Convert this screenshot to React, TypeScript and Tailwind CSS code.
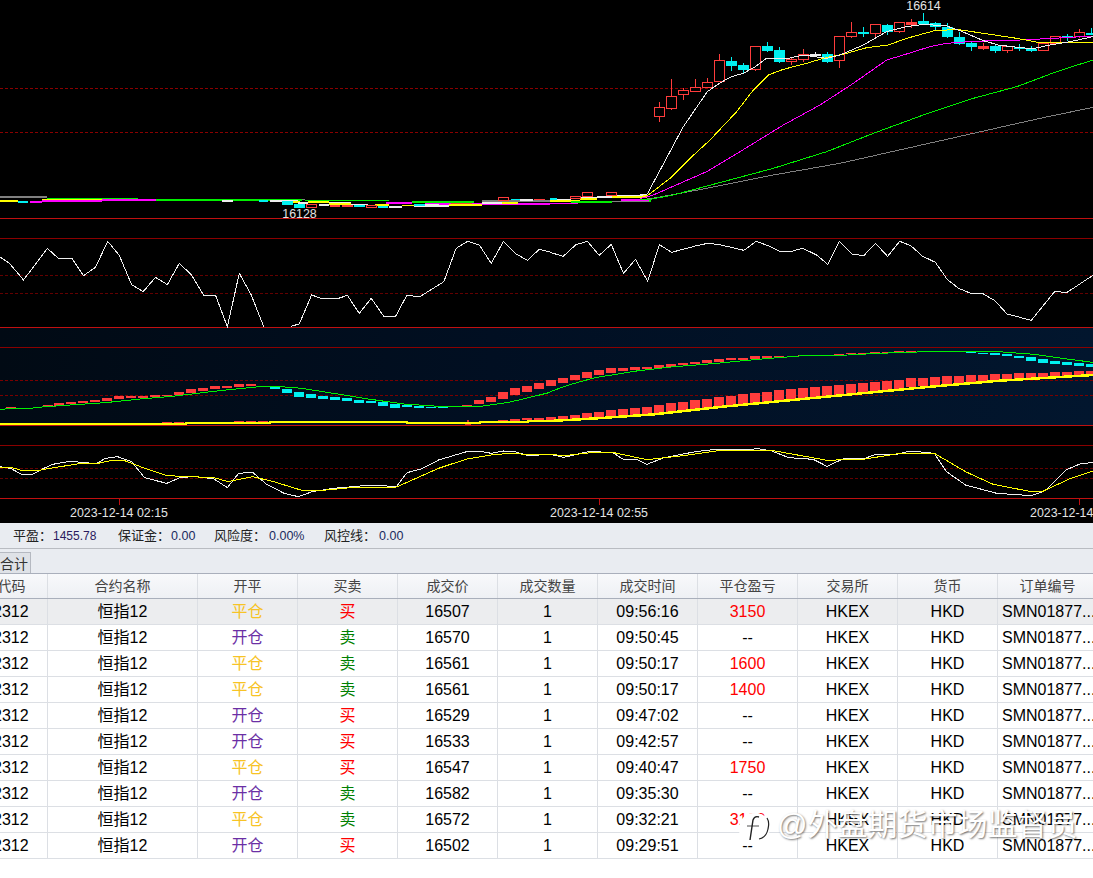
const RED = '#ff3c3c';
const CYAN = '#00f0f0';
const WHITE = '#eeeeee';
const YELLOW = '#ffff00';
const GREEN = '#00f000';
const MAGENTA = '#ff00ff';
const GRAY = '#808080';

type Pt = [number, number];

// points below were read off zoomed crops, so each chunk has its own scale/offset
const top = (p: Pt[]) => p.map(([x, y]) => `${640 + x / 3},${y / 3}`).join(' ');
const left = (p: Pt[], oy: number) => p.map(([x, y]) => `${x / 2.85},${oy + y / 3}`).join(' ');
const right = (p: Pt[], oy: number) => p.map(([x, y]) => `${550 + x / 2.888},${oy + y / 3}`).join(' ');

// x, color (r/c/w), high, body top, body bottom, low, filled
const candles: [number, string, number, number, number, number, boolean?][] = [
  [58, 'r', 306, 320, 346, 366],
  [94, 'r', 237, 287, 322, 330],
  [130, 'r', 265, 271, 283, 300],
  [166, 'r', 238, 260, 271, 275],
  [202, 'r', 234, 245, 260, 262],
  [238, 'r', 162, 181, 244, 245],
  [274, 'c', 172, 183, 195, 212],
  [310, 'c', 190, 195, 206, 218],
  [346, 'r', 139, 139, 209, 212],
  [382, 'c', 127, 138, 150, 155],
  [418, 'c', 142, 150, 182, 190],
  [454, 'r', 172, 178, 185, 195],
  [490, 'r', 148, 163, 178, 185],
  [526, 'w', 155, 163, 164, 172],
  [562, 'c', 155, 162, 182, 188],
  [598, 'r', 109, 109, 182, 203],
  [634, 'r', 66, 97, 109, 113],
  [670, 'c', 80, 96, 97, 112],
  [706, 'r', 73, 73, 100, 112],
  [742, 'c', 72, 76, 95, 104],
  [778, 'r', 67, 67, 94, 98],
  [814, 'r', 58, 67, 72, 85, true],
  [850, 'c', 40, 63, 68, 75],
  [886, 'c', 66, 70, 80, 93],
  [922, 'c', 70, 82, 110, 113],
  [958, 'c', 97, 111, 128, 134],
  [994, 'c', 125, 129, 137, 152],
  [1030, 'r', 130, 138, 143, 150, true],
  [1066, 'c', 132, 138, 150, 158],
  [1102, 'r', 138, 138, 151, 158],
  [1138, 'c', 132, 142, 143, 152],
  [1174, 'c', 138, 148, 149, 155],
  [1210, 'r', 125, 129, 149, 152],
  [1246, 'r', 108, 108, 130, 135],
  [1282, 'c', 102, 108, 109, 122],
  [1318, 'r', 87, 97, 110, 113],
  [1354, 'c', 85, 100, 101, 106],
];

// flat stretch before the jump: x1, x2, y, color
const flatLeft: [number, number, number, string][] = [
  [0, 135, 49, GRAY], [135, 392, 53, GREEN], [392, 870, 56, GRAY], [445, 860, 58, GREEN],
  [290, 445, 58, MAGENTA], [120, 290, 58, YELLOW], [120, 290, 61, MAGENTA], [0, 50, 61, YELLOW],
  [50, 80, 63, CYAN], [85, 120, 64, MAGENTA], [633, 663, 61, WHITE], [737, 763, 61, CYAN],
  [770, 850, 61, WHITE], [830, 855, 63, YELLOW], [870, 1110, 59, GREEN], [878, 938, 64, YELLOW],
  [850, 878, 67, WHITE], [910, 938, 73, WHITE], [938, 1000, 66, WHITE], [938, 1000, 69, YELLOW],
  [1000, 1050, 71, WHITE], [1100, 1175, 67, MAGENTA], [1175, 1350, 64, GREEN], [1210, 1568, 70, MAGENTA],
  [1070, 1110, 73, YELLOW], [1110, 1145, 79, WHITE], [1145, 1180, 74, YELLOW], [1180, 1280, 76, WHITE],
  [1180, 1210, 72, CYAN], [1212, 1250, 72, WHITE], [1280, 1375, 73, YELLOW], [1285, 1345, 68, RED],
  [1375, 1430, 67, WHITE], [1430, 1475, 67, YELLOW], [1375, 1568, 61, GRAY], [1455, 1482, 56, CYAN],
  [1482, 1520, 58, WHITE], [1523, 1553, 56, RED], [940, 970, 76, RED], [975, 1005, 76, RED],
  [1010, 1040, 76, CYAN], [1078, 1105, 79, CYAN],
];
const flatRight: [number, number, number, string][] = [
  [0, 60, 58, WHITE], [0, 87, 60, YELLOW], [0, 80, 68, MAGENTA], [60, 180, 64, GREEN],
  [87, 135, 52, WHITE], [87, 135, 55, YELLOW], [135, 180, 48, WHITE], [180, 280, 48, YELLOW],
  [190, 280, 44, WHITE], [205, 285, 58, MAGENTA], [180, 290, 62, GRAY], [0, 20, 55, CYAN],
  [285, 293, 60, GREEN],
];
// small outlined / filled candles inside the flat stretch (pixel coords)
const flatBoxes: [number, number, number, number, string, boolean][] = [
  [306, 204, 10, 3, RED, false],
  [294, 204, 10, 3, CYAN, true],
  [282, 201, 10, 3, CYAN, true],
  [366, 205, 10, 2, RED, false],
  [498, 197, 10, 3, RED, false],
  [570, 196, 10, 2, RED, false],
  [582, 192, 10, 4, RED, false],
  [606, 192, 10, 3, RED, false],
];

const whiteOsc1: Pt[] = [[0,231],[27,250],[67,300],[135,205],[165,234],[205,235],[238,287],[272,262],[307,184],[340,226],[375,314],[408,335],[443,292],[477,314],[511,250],[545,284],[580,345],[614,345],[648,440],[682,280],[716,345],[752,441]];
const whiteOsc2: Pt[] = [[828,439],[853,432],[888,345],[915,355],[965,355],[990,346],[1024,400],[1058,355],[1093,408],[1128,408],[1160,345],[1195,351],[1265,305],[1300,205],[1333,184],[1366,195],[1400,250],[1435,184],[1468,220],[1503,241],[1537,208],[1568,216]];
const whiteOsc3: Pt[] = [[0,217],[38,229],[75,194],[108,184],[142,226],[177,193],[212,280],[247,238],[282,304],[316,194],[351,217],[420,198],[455,190],[490,194],[560,211],[595,184],[630,197],[663,214],[697,214],[730,205],[770,225],[802,253],[836,184],[873,222],[906,227],[940,190],[975,229],[1010,184],[1042,197],[1075,228],[1113,247],[1147,298],[1180,325],[1215,340],[1250,341],[1285,362],[1320,402],[1390,421],[1458,334],[1492,338],[1568,286]];

// macd bars: zoomed x, top, bottom
const barsLeftUp: [number, number, number, string][] = [
  [32,246,249,RED],[137,240,246,RED],[169,234,243,RED],[203,231,237,RED],[237,228,234,RED],[271,225,231,RED],[305,219,228,RED],[340,212,222,RED],[374,212,219,RED],[408,212,219,RED],[442,210,216,RED],[476,210,213,RED],[510,201,210,RED],[544,192,204,RED],[578,189,198,RED],[612,183,192,RED],[647,183,189,RED],[681,177,186,RED],[715,177,183,RED],
  [784,186,192,CYAN],[818,192,204,CYAN],[852,201,216,CYAN],[886,207,219,CYAN],[920,213,222,CYAN],[955,216,225,CYAN],[989,219,228,CYAN],[1023,225,234,CYAN],[1057,228,234,CYAN],[1092,231,243,CYAN],[1126,237,249,CYAN],[1160,240,246,CYAN],[1194,243,249,CYAN],[1228,246,249,CYAN],[1262,246,249,CYAN],
  [1332,240,244,RED],[1365,225,237,RED],[1400,216,231,RED],[1434,201,222,RED],[1468,189,210,RED],[1502,183,201,RED],[1536,174,192,RED],
  [476,291,295,RED],[510,291,295,RED],[681,288,292,RED],[715,288,292,RED],[749,288,292,RED],[1434,285,289,RED],[1468,282,288,RED],[1502,279,286,RED],[1536,279,286,RED],
];
const barsRightUp: [number, number, number, string][] = [
  [3.7,165,183,RED],[37,159,174,RED],[72,150,165,RED],[107,141,159,RED],[142,135,150,RED],[176,129,144,RED],[211,129,138,RED],[245,126,135,RED],[280,126,132,RED],[315,120,129,RED],[350,117,126,RED],[384,114,120,RED],[419,111,117,RED],[453,105,114,RED],[488,102,111,RED],[523,99,105,RED],[558,99,105,RED],[592,93,102,RED],[627,93,99,RED],[662,93,96,RED],[731,90,93,RED],[766,90,93,RED],[835,87,90,RED],[870,84,87,RED],[905,84,87,RED],[939,81,84,RED],[974,81,84,RED],[1008,78,81,RED],[1043,78,81,RED],
  [1216,81,84,CYAN],[1251,84,87,CYAN],[1285,84,90,CYAN],[1320,87,93,CYAN],[1354,93,99,CYAN],[1389,96,108,CYAN],[1424,102,114,CYAN],[1458,108,117,CYAN],[1493,111,120,CYAN],[1528,114,123,CYAN],[1562,117,126,CYAN],
  [3.7,276,285,RED],[37,273,283,RED],[72,270,281,RED],[107,264,279,RED],[142,261,276,RED],[176,255,273,RED],[211,252,273,RED],[245,249,270,RED],[280,246,267,RED],[315,240,264,RED],[350,234,261,RED],[384,231,258,RED],[419,225,255,RED],[453,222,252,RED],[488,216,246,RED],[523,213,243,RED],[558,207,240,RED],[592,204,237,RED],[627,201,234,RED],[662,195,231,RED],[697,192,228,RED],[731,189,222,RED],[766,186,216,RED],[800,183,213,RED],[835,180,210,RED],[870,177,207,RED],[905,174,204,RED],[939,171,198,RED],[974,168,195,RED],[1008,165,192,RED],[1043,159,186,RED],[1078,159,183,RED],[1112,156,180,RED],[1147,153,177,RED],[1182,153,174,RED],[1216,150,174,RED],[1251,150,171,RED],[1285,147,168,RED],[1320,147,165,RED],[1354,144,165,RED],[1389,144,162,RED],[1424,144,159,RED],[1458,141,159,RED],[1493,141,156,RED],[1528,138,153,RED],[1562,138,150,RED],
];

const Poly = ({ points, color, width = 1 }: { points: string; color: string; width?: number }) => (
  <polyline points={points} fill="none" stroke={color} strokeWidth={width} />
);

const HLine = ({ y, color, dashed }: { y: number; color: string; dashed?: boolean }) => (
  <line x1={0} x2={1093} y1={y + 0.5} y2={y + 0.5} stroke={color} strokeDasharray={dashed ? '3 2' : undefined} />
);

const Chart = () => (
  <svg width={1093} height={523} viewBox="0 0 1093 523" shapeRendering="crispEdges" className="block bg-black">
    <defs>
      <linearGradient id="panel" x1="0" x2="1" y1="0" y2="0">
        <stop offset="0" stopColor="#010a14" />
        <stop offset="0.45" stopColor="#010f22" />
        <stop offset="1" stopColor="#02162e" />
      </linearGradient>
    </defs>
    <rect x={0} y={327} width={1093} height={98} fill="url(#panel)" />

    <HLine y={88} color="#8a0000" dashed />
    <HLine y={132} color="#8a0000" dashed />
    <HLine y={218} color="#c01010" />
    <HLine y={238} color="#8a0000" />
    <HLine y={275} color="#640000" dashed />
    <HLine y={293} color="#640000" dashed />
    <HLine y={327} color="#c01010" />
    <HLine y={347} color="#8a0000" />
    <HLine y={380} color="#7a0000" dashed />
    <HLine y={395} color="#7a0000" dashed />
    <HLine y={425} color="#c01010" />
    <HLine y={445} color="#8a0000" />
    <HLine y={468} color="#640000" dashed />
    <HLine y={478} color="#640000" dashed />
    <HLine y={498} color="#c01010" />
    {[119, 599, 1079].map((x) => (
      <line key={x} x1={x + 0.5} x2={x + 0.5} y1={498} y2={505} stroke="#c01010" />
    ))}

    {/* main pane */}
    {flatLeft.map(([a, b, y, c], i) => (
      <rect key={i} x={a / 2.85} y={180 + y / 3} width={(b - a) / 2.85} height={1.5} fill={c} />
    ))}
    {flatRight.map(([a, b, y, c], i) => (
      <rect key={i} x={550 + a / 2.888} y={180 + y / 3} width={(b - a) / 2.888} height={1.5} fill={c} />
    ))}
    {flatBoxes.map(([x, y, w, h, c, solid], i) => (
      <rect key={i} x={x + 0.5} y={y + 0.5} width={w} height={h} fill={solid ? c : 'black'} stroke={c} />
    ))}
    {candles.map(([x, kind, hi, t, b, lo, filled]) => {
      const color = kind === 'r' ? RED : kind === 'c' ? CYAN : WHITE;
      const cx = Math.round(640 + x / 3) + 0.5;
      const solid = kind !== 'r' || filled;
      return (
        <g key={x}>
          <line x1={cx} x2={cx} y1={hi / 3} y2={lo / 3} stroke={color} />
          <rect
            x={cx - 5}
            y={Math.round(t / 3) + 0.5}
            width={10}
            height={Math.max(Math.round((b - t) / 3), 0.5)}
            fill={solid ? color : 'black'}
            stroke={color}
          />
        </g>
      );
    })}
    <Poly color={GRAY} points={top([[0,600],[50,593],[200,565],[400,525],[600,490],[800,445],[1000,400],[1200,355],[1359,322]])} />
    <Poly color={GREEN} points={top([[0,600],[30,598],[100,585],[250,545],[400,505],[560,455],[700,400],[850,345],[1000,295],[1130,260],[1250,215],[1359,180]])} />
    <Poly color={MAGENTA} points={top([[0,596],[40,585],[200,515],[300,455],[430,375],[540,315],[640,250],[740,180],[790,165],[870,140],[920,130],[1000,124],[1140,120],[1240,115],[1359,108]])} />
    <Poly color={YELLOW} points={top([[0,590],[25,585],[90,535],[150,475],[210,420],[290,335],[340,270],[385,225],[430,208],[500,190],[550,175],[620,160],[680,143],[745,135],[800,115],[880,93],[950,88],[1050,103],[1130,115],[1200,128],[1359,127]])} />
    <Poly color={WHITE} points={top([[0,585],[22,582],[130,380],[202,275],[238,250],[274,230],[310,220],[346,200],[378,176],[440,176],[490,165],[560,175],[600,165],[670,135],[740,95],[800,80],[850,73],[920,78],[960,92],[1030,122],[1075,135],[1140,143],[1180,146],[1230,135],[1290,125],[1359,110]])} />

    {/* oscillator */}
    <Poly color={WHITE} points={left(whiteOsc1, 180)} />
    <Poly color={WHITE} points={left(whiteOsc2, 180)} />
    <Poly color={WHITE} points={right(whiteOsc3, 180)} />

    {/* macd pane */}
    {barsLeftUp.map(([x, t, b, c], i) => (
      <rect key={i} x={Math.round(x / 2.85) - 5} y={325 + t / 3} width={10} height={(b - t) / 3} fill={c} />
    ))}
    {barsRightUp.map(([x, t, b, c], i) => (
      <rect key={i} x={Math.round(550 + x / 2.888) - 5} y={325 + t / 3} width={10} height={(b - t) / 3} fill={c} />
    ))}
    <polygon points="465,425 468,419 471,425" fill="#d83030" />
    <Poly color={GREEN} points={left([[0,254],[30,250],[85,250],[120,246],[200,240],[300,233],[400,222],[500,213],[600,200],[700,189],[750,184],[800,185],[860,190],[950,205],[1050,222],[1150,237],[1250,244],[1370,244],[1450,232],[1530,212],[1568,202]], 325)} />
    <Poly color={GREEN} points={right([[0,200],[60,178],[130,158],[250,138],[350,126],[480,115],[600,103],[720,93],[860,90],[950,85],[1090,80],[1280,79],[1400,88],[1500,103],[1568,112]], 325)} />
    <Poly color={YELLOW} width={2} points={left([[0,298],[290,298],[290,296],[530,296],[530,293],[770,293],[770,290],[1160,290],[1160,293],[1368,293],[1368,290],[1505,290],[1505,287],[1568,287]], 325)} />
    <Poly color={YELLOW} width={2.5} points={right([[0,288],[135,280],[300,268],[500,245],[700,225],[900,205],[1100,185],[1300,167],[1568,150]], 325)} />

    {/* bottom pane */}
    <Poly color={WHITE} points={left([[0,425],[30,430],[65,450],[95,447],[125,430],[150,418],[200,409],[275,416],[300,400],[335,395],[375,410],[412,458],[475,475],[515,457],[560,455],[610,462],[648,488],[680,445],[720,442],[760,478],[810,505],[850,515],[890,500],[950,490],[1060,480],[1130,485],[1160,443],[1200,432],[1250,405],[1330,380],[1365,378],[1400,385],[1435,378],[1470,381],[1505,392],[1568,388]], 325)} />
    <Poly color={YELLOW} points={left([[0,427],[35,428],[60,436],[105,438],[130,432],[220,417],[275,416],[310,408],[350,405],[400,425],[475,452],[610,458],[650,470],[720,455],[780,470],[860,496],[920,496],[1000,488],[1130,486],[1250,430],[1330,402],[1400,390],[1450,385],[1500,388],[1568,388]], 325)} />
    <Poly color={WHITE} points={right([[0,388],[40,397],[110,380],[180,382],[210,402],[250,403],[280,418],[330,398],[420,380],[480,373],[560,375],[600,371],[640,378],[690,398],[760,403],[800,424],[850,400],[910,400],[940,388],[1000,388],[1040,378],[1110,385],[1145,440],[1200,480],[1290,505],[1390,512],[1430,497],[1490,435],[1530,417],[1568,412]], 325)} />
    <Poly color={YELLOW} points={right([[0,388],[40,392],[110,384],[180,382],[280,404],[400,390],[480,378],[640,376],[800,406],[910,402],[1000,387],[1110,385],[1200,440],[1280,478],[1380,498],[1425,498],[1500,462],[1568,438]], 325)} />

    <g fill="#e4e4e4" fontSize={12.4} fontFamily="'Liberation Sans', sans-serif" shapeRendering="auto">
      <text x={923.5} y={10} textAnchor="middle">16614</text>
      <text x={299.5} y={218} textAnchor="middle">16128</text>
      <text x={119} y={517} textAnchor="middle">2023-12-14 02:15</text>
      <text x={599} y={517} textAnchor="middle">2023-12-14 02:55</text>
      <text x={1030} y={517}>2023-12-14</text>
    </g>
  </svg>
);

type Row = { open: boolean; buy: boolean; price: number; time: string; profit: string };

const rows: Row[] = [
  { open: false, buy: true, price: 16507, time: '09:56:16', profit: '3150' },
  { open: true, buy: false, price: 16570, time: '09:50:45', profit: '--' },
  { open: false, buy: false, price: 16561, time: '09:50:17', profit: '1600' },
  { open: false, buy: false, price: 16561, time: '09:50:17', profit: '1400' },
  { open: true, buy: true, price: 16529, time: '09:47:02', profit: '--' },
  { open: true, buy: true, price: 16533, time: '09:42:57', profit: '--' },
  { open: false, buy: true, price: 16547, time: '09:40:47', profit: '1750' },
  { open: true, buy: false, price: 16582, time: '09:35:30', profit: '--' },
  { open: false, buy: false, price: 16572, time: '09:32:21', profit: '3100' },
  { open: true, buy: true, price: 16502, time: '09:29:51', profit: '--' },
];

const headers = ['合约代码', '合约名称', '开平', '买卖', '成交价', '成交数量', '成交时间', '平仓盈亏', '交易所', '货币', '订单编号'];
const cols = 'grid grid-cols-[100px_150px_repeat(9,100px)] w-[1150px] ml-[-52px]';

const Cell = ({ className = '', children }: { className?: string; children: React.ReactNode }) => (
  <div className={`flex items-center justify-center border-r border-[#dcdfe4] whitespace-nowrap ${className}`}>{children}</div>
);

export default function App() {
  return (
    <div
      className="relative w-[1093px] h-[878px] overflow-hidden bg-white text-black"
      style={{ fontFamily: "'Liberation Sans', 'Noto Sans CJK SC', sans-serif" }}
    >
      <Chart />

      <div className="h-[26px] bg-[#e9ecf1] border-b border-[#b9bcc2] flex items-center text-[13px] text-[#222]">
        <span className="ml-[13px] w-[105px]">平盈：<span className="ml-[1px] text-xs text-[#2a1a5e]">1455.78</span></span>
        <span className="w-[96px]">保证金：<span className="ml-[1px] text-[12.5px] text-[#1a2a5e]">0.00</span></span>
        <span className="w-[110px]">风险度：<span className="ml-[3px] text-[12.5px] text-[#1a2a5e]">0.00%</span></span>
        <span>风控线：<span className="ml-[3px] text-[12.5px] text-[#1a2a5e]">0.00</span></span>
      </div>

      <div className="h-[24px] bg-[#e9ecf1] flex items-end">
        <div className="h-[21px] w-[31px] bg-[#dfe2e7] border-t border-r border-[#b5b9c1] text-sm leading-[22px] text-[#333] overflow-hidden">
          合计
        </div>
      </div>

      <div className={`${cols} h-[26px] bg-gradient-to-b from-[#f8f9fb] to-[#eef0f4] border-y border-[#a9afbb] text-sm text-[#444]`}>
        {headers.map((h) => (
          <Cell key={h} className="border-[#a9afbb]">{h}</Cell>
        ))}
      </div>

      {rows.map((r, i) => (
        <div key={i} className={`${cols} h-[26px] border-b border-[#dcdfe4] text-base ${i === 0 ? 'bg-[#ecedef]' : ''}`}>
          <Cell>HSI2312</Cell>
          <Cell>恒指12</Cell>
          <Cell className={r.open ? 'text-[#6b2fa5]' : 'text-[#f7c325]'}>{r.open ? '开仓' : '平仓'}</Cell>
          <Cell className={r.buy ? 'text-[#ff0000]' : 'text-[#008000]'}>{r.buy ? '买' : '卖'}</Cell>
          <Cell>{r.price}</Cell>
          <Cell>1</Cell>
          <Cell>{r.time}</Cell>
          <Cell className={r.profit === '--' ? '' : 'text-[#ff0000]'}>{r.profit}</Cell>
          <Cell>HKEX</Cell>
          <Cell>HKD</Cell>
          <Cell className="!justify-start pl-[4px]">SMN01877...</Cell>
        </div>
      ))}

      {/* site watermark over the last rows */}
      <div className="absolute left-[741px] top-[807px] flex items-center gap-[6px] text-white text-[30px] leading-[36px] [text-shadow:1px_1px_2px_rgba(0,0,0,0.55)]">
        <svg width={30} height={34} viewBox="0 0 30 34" fill="none" className="relative top-[5px] overflow-visible">
          <path d="M12 0C3 0-2 8-2 17c0 4 2 8 4 10l2 6 6-3c6 0 13-1 16-6 3-4 4-10 3-14C27 3 21 0 12 0z" fill="#fff" />
          <path d="M26 5c2 3 2 7 1 11-1 5-4 9-9 10" stroke="#222" strokeWidth={1.2} />
          <path d="M18 4c-3-1-5 0-6 3l-3 20" stroke="#222" strokeWidth={1.4} />
          <path d="M6 13h12" stroke="#222" strokeWidth={0.8} />
        </svg>
        <span>@外盘期货市场监督员</span>
      </div>
    </div>
  );
}
